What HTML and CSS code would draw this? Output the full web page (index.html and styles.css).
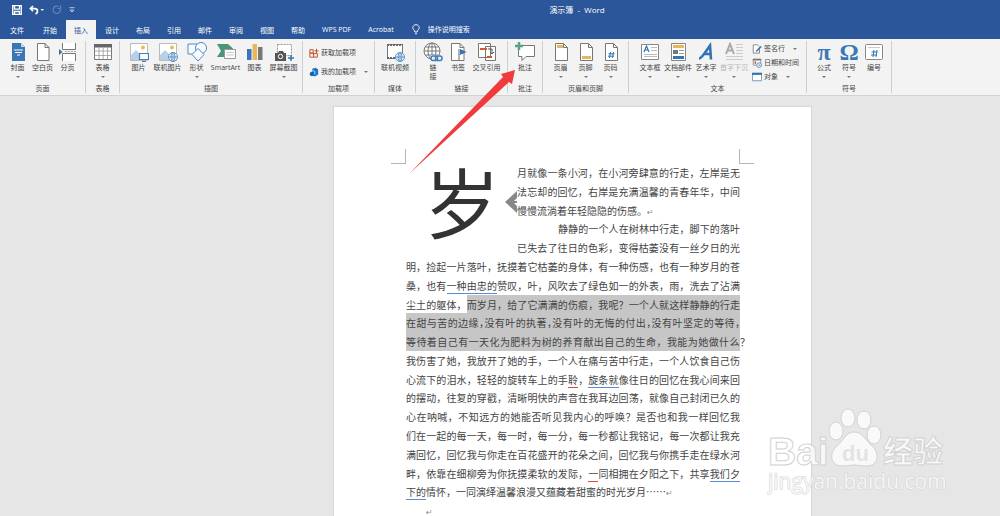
FILE: index.html
```
<!DOCTYPE html>
<html lang="zh-CN">
<head>
	<meta charset="utf-8">
	<meta name="viewport" content="width=device-width, initial-scale=1.0">
	<title>演示簿 - Word</title>
	<link rel="stylesheet" href="styles.css">
</head>
<body>
	<header>
		<div class="title-bar">
			<div class="quick">
				<button aria-label="保存"><svg width="10" height="10" viewBox="0 0 10 10"><path d="M.7.7h8.6v8.6H.7zM2.5.7v3.5h5V.7M2.5 9.3V6.5h5v2.8" fill="none" stroke="#fff" stroke-width="1.3"/></svg></button>
				<button aria-label="撤消"><svg width="16" height="10" viewBox="0 0 16 10"><path d="M4 1 1.3 3.6 4 6.3M1.5 3.6h4.3c3.6 0 3.3 4.7.6 5.2" fill="none" stroke="#fff" stroke-width="1.6"/><path d="M11.500 4h3.500l-1.750 2z" fill="#fff"/></svg></button>
				<button aria-label="重复"><svg width="10" height="10" viewBox="0 0 10 10"><path d="M6.500 1.500a3.700 3.700 0 1 0 2 3M5.500 3.500h3V.5" fill="none" stroke="#6484ba" stroke-width="1.200"/></svg></button>
				<button aria-label="自定义"><svg width="6" height="6" viewBox="0 0 6 6"><path d="M.5.700h5M1 3h4L3 5z" fill="none" stroke="#d5deed" stroke-width=".8"/></svg></button>
			</div>
			<h1>演示簿 &nbsp;-&nbsp; Word</h1>
		</div>
		<nav>
			<button class="tab file">文件</button>
			<button class="tab">开始</button>
			<button class="tab active">插入</button>
			<button class="tab">设计</button>
			<button class="tab">布局</button>
			<button class="tab">引用</button>
			<button class="tab">邮件</button>
			<button class="tab">审阅</button>
			<button class="tab">视图</button>
			<button class="tab">帮助</button>
			<button class="tab">WPS PDF</button>
			<button class="tab">Acrobat</button>
			<label class="tell">
				<svg width="8" height="11" viewBox="0 0 8 11"><path d="M2.700 8V6.600C-.6 4.600.8.7 4 .7s4.600 3.900 1.300 5.900V8zM3 9.800h2" fill="none" stroke="#fff" stroke-width=".9"/></svg>
				<input type="text" placeholder="操作说明搜索" aria-label="操作说明搜索">
			</label>
		</nav>
	</header>

	<div class="ribbon">
		<section class="group pages">
			<div class="tools">
				<button class="tool drop"><svg viewBox="0 0 20 20"><path d="M4 1h9l4 4v14H4z" fill="#3a77b5"/><path d="M13 1v4h4z" fill="#c5d8ea"/><path d="M6 8h9M7 10.500h7M9 13h3" stroke="#fff"/></svg>封面</button>
				<button class="tool"><svg viewBox="0 0 20 20"><path d="M4.500 1.500h7.500l4 4v13H4.500zM12 1.500v4h4" fill="#fff" stroke="#777"/></svg>空白页</button>
				<button class="tool"><svg viewBox="0 0 20 20"><path d="M4.500 1v6.500h13V1M4.500 19v-7.500h13V19" fill="#fff" stroke="#777"/><path d="M1 7v6l3.500-3z" fill="#2f6fae"/><path d="M7 9.500h11" stroke="#aaa" stroke-dasharray="2 1"/></svg>分页</button>
			</div>
			<h2>页面</h2>
		</section>
		<section class="group tables">
			<div class="tools">
				<button class="tool drop"><svg viewBox="0 0 20 20"><path d="M1.500 2.500h17v15h-17z" fill="#fff" stroke="#777"/><path d="M1 2h18v3.500H1z" fill="#666"/><path d="M1.500 9h17M1.500 13.500h17M6 5.500v12M10.200 5.500v12M14.500 5.500v12" stroke="#999" stroke-width=".8"/></svg>表格</button>
			</div>
			<h2>表格</h2>
		</section>
		<section class="group pictures">
			<div class="tools">
				<button class="tool"><svg viewBox="0 0 20 20"><path d="M1.500 1.500h17v17h-17z" fill="#fff" stroke="#bbb"/><circle cx="14" cy="5.500" r="2" fill="#ecb95b"/><path d="m2 18 0-5 5-5 8 8v2z" fill="#b7d0e8"/><path d="M10.500 11.500h9v6h-9zM13 19.500h4" fill="#fff" stroke="#3f7fbb" stroke-width="1.200"/></svg>图片</button>
				<button class="tool"><svg viewBox="0 0 20 20"><path d="M1.500 1.500h17v17h-17z" fill="#fff" stroke="#bbb"/><circle cx="14" cy="5.500" r="2" fill="#ecb95b"/><path d="m2 18 0-5 5-5 8 8v2z" fill="#b7d0e8"/><g fill="#fff" stroke="#5a91c5"><circle cx="15" cy="15" r="4.500"/><path d="M10.500 15h9M15 10.500v9"/><ellipse cx="15" cy="15" rx="2" ry="4.500" fill="none"/></g></svg>联机图片</button>
				<button class="tool drop"><svg viewBox="0 0 20 20" fill="#f8fbff" stroke="#4d8ac3"><path d="M1 2h9v10H1z"/><circle cx="14" cy="6" r="5.500"/><path d="m11 6.500 6 6-6 6.500-6-6.500z"/></svg>形状</button>
				<button class="tool"><svg viewBox="0 0 20 20"><path d="M1 2h11l5 4.500-3 3.500-6 5H1l4-6z" fill="#4d9377"/><path d="M8.500 7.500h11v9h-11z" fill="#fff" stroke="#999"/><path d="M10.500 10.500H18M10.500 13H18" stroke="#c9c9c9"/></svg>SmartArt</button>
				<button class="tool"><svg viewBox="0 0 20 20"><path d="M2 7h4.500v11H2z" fill="#3777b6"/><path d="M7.500 2h4.500v16H7.500z" fill="#eab65d"/><path d="M13 5h4.500v13H13z" fill="#777"/></svg>图表</button>
				<button class="tool drop"><svg viewBox="0 0 20 20"><path d="M3.500 2.500h14v11h-14z" fill="#fff" stroke="#999" stroke-dasharray="2 1"/><path d="M1 11h3l1-2h4l1 2h2v8H1z" fill="#555"/><circle cx="6.500" cy="14.500" r="2.200" fill="#555" stroke="#fff"/><path d="M17 13v6M14 16h6" stroke="#2f75b5" stroke-width="1.500"/></svg>屏幕截图</button>
			</div>
			<h2>插图</h2>
		</section>
		<section class="group addins">
			<div class="stack">
				<button class="line"><svg viewBox="0 0 12 12"><path d="M1 2h4v4H1zM1 6.500h4.500V11H1zM5.500 6.500H10V11H5.500zM9 1v5M6.500 3.500h5" fill="none" stroke="#c8562e" stroke-width="1.200"/></svg>获取加载项</button>
				<button class="line drop"><svg viewBox="0 0 12 12"><path d="m4 2 4-1 3 2v6l-4 2.500L4 10z" fill="#1874c5"/><path d="m1 7 2.500-1.500L6 7v3L3.500 11 1 10z" fill="#0f65b1"/><path d="M4.500 4 7 5.500V9" stroke="#d7e8f6" fill="none"/></svg>我的加载项</button>
			</div>
			<h2>加载项</h2>
		</section>
		<section class="group media">
			<div class="tools">
				<button class="tool"><svg viewBox="0 0 20 20"><path d="M2.500 2.500h15v14h-15z" fill="#fff" stroke="#777"/><path d="M2 3h16M2 16h9" stroke="#666" stroke-width="2" stroke-dasharray="2 1"/><g fill="#fff" stroke="#5a91c5"><circle cx="15" cy="15" r="4.500"/><path d="M10.500 15h9M15 10.500v9"/><ellipse cx="15" cy="15" rx="2" ry="4.500" fill="none"/></g></svg>联机视频</button>
			</div>
			<h2>媒体</h2>
		</section>
		<section class="group links">
			<div class="tools">
				<button class="tool"><svg viewBox="0 0 20 20"><g fill="#fff" stroke="#777"><circle cx="9" cy="9" r="8"/><path d="M1 9h16M9 1v16M2.500 5h13M2.500 13h13"/><ellipse cx="9" cy="9" rx="4" ry="8" fill="none"/></g><path d="M8 13h12v7H8z" fill="#f3f3f3"/><rect x="8" y="14" width="6.500" height="4.500" rx="2" fill="none" stroke="#3b7cba" stroke-width="1.500"/><rect x="12.500" y="14" width="6.500" height="4.500" rx="2" fill="none" stroke="#3b7cba" stroke-width="1.500"/></svg>链<br>接</button>
				<button class="tool"><svg viewBox="0 0 20 20"><path d="M3.500 1.500h8.500l4 4v13H3.500zM12 1.500v4h4" fill="#fff" stroke="#777"/><path d="M11 7v11" stroke="#666"/><path d="m12 7 6.500 3-6.500 3z" fill="#2f75b5"/></svg>书签</button>
				<button class="tool wide"><svg viewBox="0 0 20 20"><path d="M1.500 1.500h12v14h-12zM8.500 4.500h10v14h-10z" fill="#fff" stroke="#777"/><path d="M3 7h7M10 15h5" stroke="#cc5b37" stroke-width="2"/><path d="M11 7h4v5M13 10l2 2 2-2" fill="none" stroke="#555"/></svg>交叉引用</button>
			</div>
			<h2>链接</h2>
		</section>
		<section class="group comments">
			<div class="tools">
				<button class="tool"><svg viewBox="0 0 20 20"><path d="M3.500 3.500h16v11H11l-4 4v-4H3.500z" fill="#fff" stroke="#777"/><path d="M4 0v8M0 4h8" stroke="#5ba184" stroke-width="2.500"/></svg>批注</button>
			</div>
			<h2>批注</h2>
		</section>
		<section class="group headers">
			<div class="tools">
				<button class="tool drop"><svg viewBox="0 0 20 20"><path d="M4.500 1.500h8l4 4v13h-12zM12.500 1.500v4h4" fill="#fff" stroke="#777"/><path d="M6 3h6v3H6z" fill="#eab65d"/></svg>页眉</button>
				<button class="tool drop"><svg viewBox="0 0 20 20"><path d="M4.500 1.500h8l4 4v13h-12zM12.500 1.500v4h4" fill="#fff" stroke="#777"/><path d="M6 14h9v3H6z" fill="#eab65d"/></svg>页脚</button>
				<button class="tool drop"><svg viewBox="0 0 20 20"><path d="M4.500 1.500h8l4 4v13h-12zM12.500 1.500v4h4" fill="#fff" stroke="#777"/><path d="m9.500 10-1 6m4-6-1 6M7.500 11.800h6M7 14.200h6" stroke="#2f75b5"/></svg>页码</button>
			</div>
			<h2>页眉和页脚</h2>
		</section>
		<section class="group texts">
			<div class="tools">
				<button class="tool drop"><svg viewBox="0 0 20 20"><path d="M1.500 2.500h17v15h-17z" fill="#fff" stroke="#888"/><path d="m4 10 2.500-6L9 10M5 8h3" fill="none" stroke="#2f75b5" stroke-width="1.200"/><path d="M11 5.500h6M11 8.500h6M4 12.500h13M4 14.500h13" stroke="#bbb"/></svg>文本框</button>
				<button class="tool drop"><svg viewBox="0 0 20 20"><path d="M3.500 1.500h14v17h-14z" fill="#fff" stroke="#888"/><path d="M5 3h11v3H5z" fill="#eab65d"/><path d="M5 8h5v4H5z" fill="#777"/><path d="M11 8.500h5M11 11.500h5" stroke="#999"/><path d="M5 14h11v3H5z" fill="#3474b3"/></svg>文档部件</button>
				<button class="tool drop"><svg viewBox="0 0 20 20"><path d="M3 16.500c3 0 8-9 11-13l1 14M7.500 12h8" fill="none" stroke="#3174b3" stroke-width="2.600"/></svg>艺术字</button>
				<button class="tool drop" disabled><svg viewBox="0 0 20 20"><path d="m2 12 4-10 4 10M3 8.500h6" fill="none" stroke="#aaa" stroke-width="2"/><path d="M12 2.500h7M12 5.500h7M12 8.500h7M12 11.500h7M2 14.500h17M2 17.500h17" stroke="#ccc"/></svg>首字下沉</button>
			</div>
			<div class="stack small">
				<button class="line drop"><svg viewBox="0 0 12 12"><path d="M1.500 1h5L9 3.500V11H1.500z" fill="#fff" stroke="#777"/><path d="m5 9 6-6" stroke="#2f75b5" stroke-width="1.800"/></svg>签名行</button>
				<button class="line"><svg viewBox="0 0 12 12"><path d="M1.500 1.500h9v7h-9z" fill="#fff" stroke="#888"/><path d="M1 1h10v2H1z" fill="#777"/><path d="M3 4h2v3H3z" fill="#cc5b37"/><circle cx="8.500" cy="8.500" r="2.800" fill="#fff" stroke="#3f80bd"/><path d="M8.500 7v2H10" stroke="#555" fill="none" stroke-width=".7"/></svg>日期和时间</button>
				<button class="line drop"><svg viewBox="0 0 12 12"><path d="M.5 1.500h11v9H.5z" fill="#fff" stroke="#5b89b5"/><path d="M0 1h12v2.500H0z" fill="#3474b3"/></svg>对象</button>
			</div>
			<h2>文本</h2>
		</section>
		<section class="group symbols">
			<div class="tools">
				<button class="tool drop"><span class="glyph">π</span>公式</button>
				<button class="tool drop"><span class="glyph">Ω</span>符号</button>
				<button class="tool"><svg viewBox="0 0 20 20"><rect x="1.500" y="2.500" width="17" height="15" rx="1" fill="#fff" stroke="#888"/><path d="M4 5.500h12" stroke="#ccc"/><path d="m10 8-1 7m4-7-1 7M7.500 10h6M7 13h6" stroke="#2f75b5"/></svg>编号</button>
			</div>
			<h2>符号</h2>
		</section>
	</div>

	<main>
		<div class="page">
			<div class="corners"><span class="corner left"></span><span class="corner right"></span></div>
			<article>
				<div class="drop-cap">岁</div>
				<p class="side">月就像一条小河，在小河旁肆意的行走，左岸是无</p>
				<p class="side">法忘却的回忆，右岸是充满温馨的青春年华，中间</p>
				<p class="side end">慢慢流淌着年轻隐隐的伤感。<i>↵</i></p>
				<p class="side indent">静静的一个人在树林中行走，脚下的落叶</p>
				<p class="side">已失去了往日的色彩，变得枯萎没有一丝夕日的光</p>
				<p>明，捡起一片落叶，抚摸着它枯萎的身体，有一种伤感，也有一种岁月的苍</p>
				<p>桑，也有<u>一种由忠的</u>赞叹，叶，风吹去了绿色如一的外表，雨，洗去了沾满</p>
				<p>尘土的躯体，<mark>而岁月，给了它满满的伤痕，我呢？一个人就这样静静的行走</mark></p>
				<p class="tight"><mark>在甜与苦的边缘，没有叶的执著，没有叶的无悔的付出，没有叶坚定的等待，</mark></p>
				<p class="hang"><mark>等待着自己有一天化为肥料为树的养育献出自己的生命，我能为她做什么</mark>？</p>
				<p>我伤害了她，我放开了她的手，一个人在痛与苦中行走，一个人饮食自己伤</p>
				<p>心流下的泪水，轻轻的旋转车上的手<u class="red">聆</u>，<u>旋条就</u>像往日的回忆在我心间来回</p>
				<p>的摆动，往复的穿戳，清晰明快的声音在我耳边回荡，就像自己封闭已久的</p>
				<p>心在呐喊，不知远方的她能否听见我内心的呼唤？是否也和我一样回忆我</p>
				<p>们在一起的每一天，每一时，每一分，每一秒都让我铭记，每一次都让我充</p>
				<p>满回忆，回忆我与你走在百花盛开的花朵之间，回忆我与你携手走在绿水河</p>
				<p>畔，依靠在细柳旁为你抚摸柔软的发际，<u class="red">一</u>同相拥在夕阳之下，共享<u>我们夕</u></p>
				<p class="end"><u>下的</u>情怀，一同演绎温馨浪漫又蕴藏着甜蜜的时光岁月……<i>↵</i></p>
				<p class="end last"><i>↵</i></p>
			</article>
			<svg class="anchor" width="12" height="22" viewBox="0 0 12 22"><path d="M12 0v7l-3 3h3v2H9l3 3v7L0 11z" fill="#888"/></svg>
		</div>
	</main>

	<svg class="pointer" width="110" height="106" viewBox="0 0 110 106"><path d="M1 104 95 7l-2-3 14-4-3 14-3-2z" fill="#ef3b3b"/></svg>

	<div class="watermark">
		<svg width="182" height="92" viewBox="0 0 182 92">
			<g fill="#fff" fill-opacity=".75" stroke="#d2d2d2" stroke-width="1">
				<ellipse cx="69" cy="25" rx="7" ry="9"/>
				<ellipse cx="81" cy="12" rx="7" ry="9"/>
				<ellipse cx="97" cy="14" rx="7" ry="9"/>
				<ellipse cx="107" cy="29" rx="7" ry="9"/>
				<path d="M87 26c9 0 11 8 17 13 10 8 7 21-4 21-6 0-9-1-13-1s-7 1-12 1c-11 0-14-12-5-20 7-6 9-14 17-14z"/>
				<text x="1" y="59" font-size="39" class="logo-text">Bai</text>
				<text x="75" y="55" font-size="22" class="logo-text du">du</text>
				<text x="116" y="56" font-size="30" class="logo-text cjk">经验</text>
			</g>
			<text x="1" y="83" font-size="21" class="url">jingyan.baidu.com</text>
		</svg>
	</div>
</body>
</html>
```
FILE: styles.css
```
* {
	padding: 0;
	margin: 0;
	box-sizing: border-box;
}
body {
	height: 100vh;
	display: flex;
	flex-direction: column;
	position: relative;
	overflow: hidden;
	font-family: "Open Sans", "Noto Sans CJK SC", sans-serif;
	font-size: 7px;
	color: #444;
	background: #e6e6e6;
}
button, input {
	font: inherit;
	color: inherit;
	border: none;
	background: transparent;
}
h1, h2 {
	font-size: 7px;
	font-weight: normal;
}
header {
	flex: none;
	background: #2b579a;
	color: white;
}
.title-bar {
	height: 20px;
	display: flex;
	align-items: center;
	justify-content: center;
	padding: 0 0 2px 154px;
	position: relative;
}
.title-bar h1 {
	font-size: 8px;
}
.quick {
	position: absolute;
	left: 12px;
	top: 5px;
	display: flex;
	align-items: center;
	gap: 7px;
}
.quick button, .quick svg {
	display: block;
}
nav {
	display: flex;
	height: 19px;
	gap: 1px;
}
.tab {
	padding: 0 8px;
	white-space: nowrap;
}
.tab.file {
	padding: 0 10px;
}
.tab.active {
	background: #f3f3f3;
	color: #2b579a;
}
.tell {
	display: flex;
	align-items: center;
	gap: 8px;
	margin-left: 9px;
}
.tell input {
	width: 90px;
}
.tell input::placeholder {
	color: white;
	opacity: 1;
}

/* ribbon */
.ribbon {
	flex: none;
	display: flex;
	height: 57px;
	background: #f3f3f3;
	border-bottom: 1px solid #d2d2d2;
}
.group {
	flex: none;
	display: grid;
	grid-template-columns: auto auto;
	grid-template-rows: 1fr 9px;
	justify-content: center;
	margin: 2px 0;
	border-right: 1px solid #cfcfcf;
}
.group h2 {
	grid-column: 1/-1;
	text-align: center;
	line-height: 9px;
}
.pages { width: 86px; }
.tables { width: 34px; }
.pictures { width: 183px; }
.addins { width: 72px; }
.media { width: 41px; }
.links { width: 92px; }
.comments { width: 35px; }
.headers { width: 86px; }
.texts { width: 178px; }
.symbols { width: 85px; }
.tools {
	display: flex;
	align-items: flex-start;
}
.tool {
	width: 25px;
	display: flex;
	flex-direction: column;
	align-items: center;
	line-height: 9px;
	white-space: nowrap;
}
.tool svg, .glyph {
	width: 20px;
	height: 20px;
	margin: 1px 0;
}
.pictures .tool {
	width: 29px;
}
.texts .tool {
	width: 28px;
}
.tool.wide {
	width: 32px;
}
.tool:disabled {
	color: #b5b5b5;
}
.drop::after {
	content: "";
	border: 2px solid transparent;
	border-top-color: #777;
	border-bottom: none;
}
.tool.drop::after {
	margin-top: 4px;
}
.glyph {
	font: bold 24px/20px "Liberation Serif", serif;
	color: #3a78b5;
}
.stack {
	display: flex;
	flex-direction: column;
	justify-content: center;
	gap: 7px;
}
.stack.small {
	gap: 2px;
	padding-left: 4px;
}
.line {
	display: flex;
	align-items: center;
	gap: 2px;
	line-height: 12px;
	white-space: nowrap;
}
.line svg {
	width: 10px;
	height: 10px;
}
.line.drop::after {
	margin-left: 6px;
}

/* document */
main {
	flex: 1;
	min-height: 0;
	overflow: hidden;
	display: flex;
	justify-content: center;
	padding: 11px 0 0 145px;
}
.page {
	flex: 0 1 477px;
	position: relative;
	background: white;
	box-shadow: 0 0 1px 1px #d8d8d8;
	padding-top: 42px;
}
.corners {
	display: flex;
	justify-content: space-between;
	padding: 0 57px;
}
.corner {
	width: 15px;
	height: 15px;
	border: 0 solid #b5b5b5;
}
.corner.left {
	border-width: 0 1px 1px 0;
}
.corner.right {
	border-width: 0 0 1px 1px;
}
article {
	display: grid;
	grid-template-columns: 111px 1fr;
	grid-auto-rows: minmax(0, 1fr);
	min-height: 357px;
	padding: 0 71px 0 72px;
	font-family: "Noto Sans CJK SC", sans-serif;
	font-size: 10px;
	line-height: 18px;
	color: #444;
}
article p {
	grid-column: 1/-1;
	text-align-last: justify;
	white-space: nowrap;
}
article p.side {
	grid-column: 2;
}
article p.indent {
	padding-left: 41px;
}
article p.end {
	text-align-last: left;
}
article p.last {
	padding-left: 20px;
}
/* half-width punctuation keeps the full row inside the margin */
article p.tight {
	font-feature-settings: "halt";
}
/* closing mark hangs past the right margin */
article p.hang {
	margin-right: -10px;
}
article i {
	font-family: "DejaVu Sans", sans-serif;
	font-style: normal;
	font-size: 8px;
	line-height: 8px;
	color: #888;
}
.drop-cap {
	grid-row: 1/6;
	padding-left: 18px;
	font-size: 76px;
	line-height: 72px;
	color: #333;
}
mark {
	background: #c6c6c6;
	color: inherit;
	padding: 2px 0;
}
u {
	text-decoration: none;
	border-bottom: 1px solid #5b8bd6;
}
u.red {
	border-color: #e0444c;
}
.anchor {
	position: absolute;
	left: 171px;
	top: 84px;
}

.pointer {
	position: absolute;
	left: 408px;
	top: 70px;
}
.watermark {
	position: absolute;
	right: 51px;
	bottom: 18px;
}
.watermark svg {
	display: block;
}
.logo-text {
	font-family: "Liberation Sans", sans-serif;
	font-weight: bold;
}
.logo-text.cjk {
	font-family: "Noto Sans CJK SC", sans-serif;
}
.logo-text.du {
	fill: #dcdcdc;
	stroke: none;
}
.url {
	font-family: "Open Sans", sans-serif;
	fill: #fff;
	fill-opacity: .75;
	stroke: #d2d2d2;
	stroke-width: 1px;
	paint-order: stroke;
}
```
